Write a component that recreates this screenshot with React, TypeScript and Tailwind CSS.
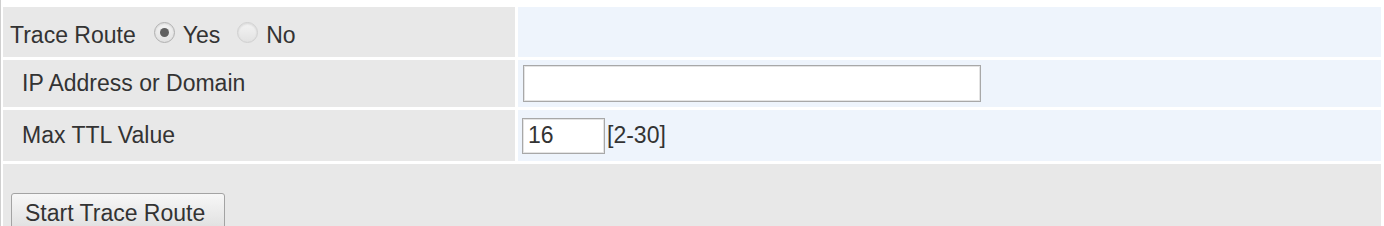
import React from 'react';

function Radio({ checked }: { checked?: boolean }) {
    return (
        <span
            className={`flex h-[21px] w-[21px] items-center justify-center rounded-full border ${
                checked ? 'border-[#b0b0b0]' : 'border-[#d0d0d0]'
            } bg-gradient-to-b from-[#f4f4f4] to-[#e2e2e2] shadow-[inset_0_1px_2px_rgba(0,0,0,0.12)]`}
        >
            {checked && <span className="h-[9px] w-[9px] rounded-full bg-[#606060]" />}
        </span>
    );
}

export default function App() {
    return (
        <div className="h-[226px] overflow-hidden bg-white font-['Liberation_Sans',Arial,sans-serif] text-[23px] text-[#333]">
            <div className="border-l border-[#cfcfcf] pl-[2px] pr-[3px] pt-[7px]">
                <div className="grid grid-cols-[512px_1fr] gap-x-[3px] gap-y-[3px]">
                    {/* Trace Route */}
                    <div className="flex h-[50px] items-center bg-[#e8e8e8] pl-[7px] pt-[6px]">
                        <span>Trace Route</span>
                        <span className="ml-[18px] -mt-[5px]">
                            <Radio checked />
                        </span>
                        <span className="ml-[8px]">Yes</span>
                        <span className="ml-[17px] -mt-[5px]">
                            <Radio />
                        </span>
                        <span className="ml-[8px]">No</span>
                    </div>
                    <div className="h-[50px] bg-[#eef4fc]" />

                    {/* IP Address */}
                    <div className="flex h-[47px] items-center bg-[#e8e8e8] pl-[19px]">
                        IP Address or Domain
                    </div>
                    <div className="flex h-[47px] items-center bg-[#eef4fc] pl-[5px]">
                        <input
                            type="text"
                            className="h-[37px] w-[458px] border border-[#a8a8a8] bg-white px-[5px] shadow-[inset_0_0_0_1px_#e4e4e4] outline-none"
                        />
                    </div>

                    {/* Max TTL */}
                    <div className="flex h-[51px] items-center bg-[#e8e8e8] pl-[19px]">
                        Max TTL Value
                    </div>
                    <div className="flex h-[51px] items-center bg-[#eef4fc] pl-[4px]">
                        <input
                            type="text"
                            defaultValue="16"
                            className="h-[36px] w-[83px] border border-[#a8a8a8] bg-white px-[5px] text-[#333] shadow-[inset_0_0_0_1px_#e4e4e4] outline-none"
                        />
                        <span className="ml-[2px]">[2-30]</span>
                    </div>

                    {/* Action */}
                    <div className="col-span-2 bg-[#e8e8e8] pl-[8px] pt-[29px] pb-[8px]">
                        <button
                            type="button"
                            className="h-[40px] w-[214px] rounded-[3px] border border-[#a3a3a3] bg-gradient-to-b from-[#f7f7f7] to-[#dedede] text-left pl-[13px] text-[#333]"
                        >
                            Start Trace Route
                        </button>
                    </div>
                </div>
            </div>
        </div>
    );
}
